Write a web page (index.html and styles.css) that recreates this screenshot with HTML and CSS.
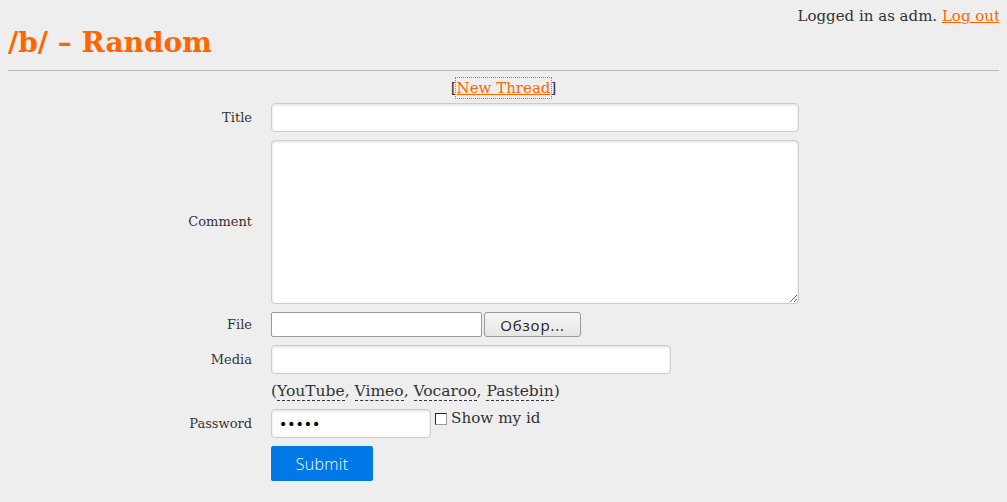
FILE: index.html
```html
<!DOCTYPE html>
<html>
<head>
<meta charset="utf-8">
<link rel="stylesheet" href="styles.css">
</head>
<body>
<header class="top">
  <div class="userbar">Logged in as adm. <a href="#">Log out</a></div>
  <h1 class="board-title">/b/ – Random</h1>
</header>
<hr class="rule">
<div class="newthread">[<a href="#" class="nt-link">New Thread</a>]</div>
<form class="postform">
  <label class="lbl">Title</label>
  <div class="field"><input type="text" class="inp inp-title"></div>

  <label class="lbl">Comment</label>
  <div class="field"><textarea class="inp inp-comment"></textarea></div>

  <label class="lbl">File</label>
  <div class="field file-field"><span class="file-box"></span><span class="file-btn">Обзор...</span></div>

  <label class="lbl">Media</label>
  <div class="field"><input type="text" class="inp inp-media"></div>

  <span class="lbl"></span>
  <div class="hint">(<span class="abbr">YouTube</span>, <span class="abbr">Vimeo</span>, <span class="abbr">Vocaroo</span>, <span class="abbr">Pastebin</span>)</div>

  <label class="lbl">Password</label>
  <div class="field pw-field"><input type="password" class="inp inp-pw" value="12345"><span class="chk"></span><span class="chk-label">Show my id</span></div>

  <span class="lbl"></span>
  <div class="field"><button type="button" class="submit">Submit</button></div>
</form>
</body>
</html>
```
FILE: styles.css
```css
html, body {
  background: #eeeeee;
}
body {
  margin: 8px;
  font-family: "DejaVu Serif", serif;
  color: #333;
}
a {
  color: #ff6600;
}
.userbar {
  text-align: right;
  font-size: 15px;
  line-height: 16px;
  margin-right: -1px;
}
.board-title {
  margin: 2px 0 0 0;
  font-size: 28px;
  line-height: 34px;
  color: #ff6600;
  font-weight: bold;
}
.rule {
  border: 0;
  border-top: 1px solid #bbb;
  margin: 10px 0 7px 0;
  height: 0;
}
.newthread {
  text-align: center;
  font-size: 15px;
  line-height: 20px;
}
.nt-link {
  outline: 1px dotted #ff6600;
  outline-offset: 1px;
}
.postform {
  display: grid;
  grid-template-columns: 244px auto;
  grid-template-rows: 29px 164px 25px 29px 19px 29px 35px;
  column-gap: 19px;
  row-gap: 8px;
  margin-top: 5px;
  align-items: center;
}
.lbl {
  text-align: right;
  font-size: 13px;
  line-height: 16px;
}
.field {
  display: flex;
  align-items: center;
  height: 100%;
}
.inp {
  box-sizing: border-box;
  border: 1px solid #ccc;
  border-radius: 4px;
  box-shadow: inset 0 1px 3px #ddd;
  background: #fff;
  margin: 0;
  font-family: "Liberation Sans", sans-serif;
}
.inp-title {
  width: 528px;
  height: 29px;
}
.inp-comment {
  width: 528px;
  height: 164px;
  resize: vertical;
}
.file-field {
  gap: 2px;
}
.file-box {
  box-sizing: border-box;
  width: 211px;
  height: 25px;
  border: 1px solid #999;
  border-radius: 2px;
  background: #fff;
}
.file-btn {
  box-sizing: border-box;
  width: 97px;
  height: 25px;
  border: 1px solid #999;
  border-radius: 3px;
  background: linear-gradient(#f6f6f6, #e6e6e6);
  font-family: "Open Sans", sans-serif;
  font-size: 15px;
  letter-spacing: 0.8px;
  color: #222;
  display: flex;
  align-items: center;
  justify-content: center;
}
.inp-media {
  width: 400px;
  height: 29px;
}
.hint {
  font-size: 15.5px;
  line-height: 19px;
  white-space: nowrap;
}
.abbr {
  border-bottom: 1px dashed #333;
}
.pw-field {
  align-items: flex-start;
}
.inp-pw {
  width: 160px;
  height: 29px;
  padding: 0 7px;
  font-family: "DejaVu Sans", sans-serif;
  font-size: 14px;
  color: #000;
}
.chk {
  box-sizing: border-box;
  width: 12px;
  height: 12px;
  border: 1px solid #999;
  border-top-color: #222;
  border-left-color: #222;
  background: #fff;
  margin: 4px 4px 0 4px;
}
.chk-label {
  font-size: 15.2px;
  line-height: 18px;
}
.submit {
  width: 102px;
  height: 35px;
  background: rgb(0, 120, 231);
  color: #fff;
  border: 0;
  border-radius: 2px;
  font-family: "Open Sans", sans-serif;
  font-weight: 300;
  font-size: 16px;
  letter-spacing: 0.3px;
  padding: 0;
}
```
